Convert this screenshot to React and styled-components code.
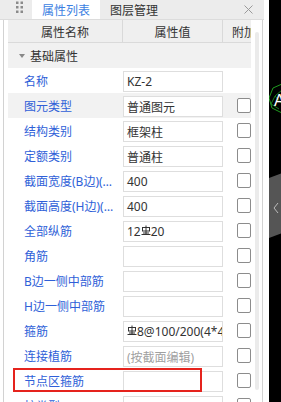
import React from 'react';
import styled, { createGlobalStyle } from 'styled-components';

const GlobalStyle = createGlobalStyle`
  html, body { margin: 0; padding: 0; background: #fff; }
  body {
    font-family: "Noto Sans", "Noto Sans CJK SC", sans-serif;
    font-size: 12px;
    color: #333;
  }
`;

const Page = styled.div`
  display: flex;
  width: 281px;
  height: 402px;
  overflow: hidden;
`;

const Panel = styled.div`
  width: 268px;
  display: flex;
  flex-direction: column;
  background: #fff;
`;

const TabBar = styled.div`
  flex-shrink: 0;
  height: 20px;
  width: 264px;
  display: flex;
  align-items: stretch;
  background: #ececec;
  border-bottom: 1px solid #dcdcdc;
  box-sizing: border-box;
`;

const Grip = styled.div`
  width: 32px;
  display: flex;
  justify-content: flex-start;
  padding-left: 16px;
  box-sizing: border-box;
  margin-top: -3px;
`;

const Tab = styled.div`
  width: 68px;
  display: flex;
  align-items: center;
  justify-content: ${(p) => (p.$active ? 'center' : 'flex-start')};
  padding-left: ${(p) => (p.$active ? '0' : '10px')};
  background: ${(p) => (p.$active ? '#fff' : 'transparent')};
  color: ${(p) => (p.$active ? '#3c7fe2' : '#333')};
  font-family: "Noto Sans CJK SC", sans-serif;
  font-size: 12px;
  line-height: 1;
`;

const Close = styled.div`
  margin-left: auto;
  width: 20px;
  display: flex;
  align-items: center;
  justify-content: flex-start;
`;

const Body = styled.div`
  flex: 1;
  display: flex;
  min-height: 0;
`;

const LeftGutter = styled.div`
  width: 8px;
  box-sizing: border-box;
  padding-left: 3px;
  display: flex;
`;

const Line = styled.div`
  width: 1px;
  background: #d2d2d2;
  align-self: stretch;
`;

const Grid = styled.div`
  width: 243px;
  display: flex;
  flex-direction: column;
  overflow: hidden;
`;

const HeaderRow = styled.div`
  flex-shrink: 0;
  display: grid;
  grid-template-columns: 115px 100px 28px;
  height: 23px;
  background: #efefef;
  border-bottom: 1px solid #dadada;
  box-sizing: border-box;
`;

const HeaderCell = styled.div`
  display: flex;
  align-items: center;
  justify-content: ${(p) => (p.$left ? 'flex-start' : 'center')};
  padding-left: ${(p) => (p.$left ? '9px' : '0')};
  border-right: ${(p) => (p.$last ? 'none' : '1px solid #d9d9d9')};
  font-family: "Noto Sans CJK SC", sans-serif;
  white-space: nowrap;
  overflow: hidden;
  color: #333;
`;

const GroupRow = styled.div`
  flex-shrink: 0;
  height: 25px;
  display: flex;
  align-items: center;
  background: #f1f1f1;
  padding-left: 11px;
  gap: 5px;
  font-family: "Noto Sans CJK SC", sans-serif;
  color: #333;
`;

const Caret = styled.span`
  width: 0;
  height: 0;
  border-left: 3px solid transparent;
  border-right: 3px solid transparent;
  border-top: 4px solid #888;
  margin-top: 1px;
`;

const Row = styled.div`
  flex-shrink: 0;
  position: relative;
  display: grid;
  grid-template-columns: 115px 100px 28px;
  height: 25px;
  background: ${(p) => (p.$hover ? '#f2f2f2' : '#fff')};
`;

const Label = styled.div`
  padding-left: 16px;
  padding-right: 6px;
  display: flex;
  align-items: center;
  color: #2f5fd8;
  white-space: nowrap;
  overflow: hidden;
  min-width: 0;

  span {
    overflow: hidden;
    text-overflow: ellipsis;
  }
`;

const ValueBox = styled.div`
  margin-top: 3px;
  height: 21px;
  box-sizing: border-box;
  border: 1px solid #dedede;
  background: #fff;
  padding-left: 3px;
  display: flex;
  align-items: center;
  white-space: nowrap;
  overflow: hidden;
  color: ${(p) => (p.$muted ? '#a0a0a0' : '#333')};

  svg { flex-shrink: 0; }
`;

const CheckCell = styled.div`
  padding-left: 14px;
  padding-top: 5px;
`;

const Check = styled.div`
  width: 14px;
  height: 15px;
  box-sizing: border-box;
  border: 1px solid #8c8c8c;
  border-radius: 2px;
  background: #fff;
`;

const Mark = styled.div`
  position: absolute;
  left: 5px;
  top: 0;
  width: 189px;
  height: 24px;
  box-sizing: border-box;
  border: 2px solid #e5231d;
  pointer-events: none;
`;

const ScrollGutter = styled.div`
  width: 11px;
  display: flex;
  justify-content: flex-start;
  padding: 12px 0 12px 4px;
  box-sizing: border-box;
`;

const Track = styled.div`
  width: 4px;
  border-radius: 2px;
  background: #ebebeb;
`;

const Canvas = styled.div`
  flex: 1;
  background: #000;
  margin-left: 5px;
`;

const RebarSymbol = () => (
  <svg width="10" height="11" viewBox="0 0 10 11" style={{ marginBottom: 3 }}>
    <g stroke="#333" strokeWidth="1" fill="none">
      <rect x="1.5" y="2.5" width="7" height="3.5" />
      <line x1="5" y1="0.5" x2="5" y2="9.5" />
      <line x1="0.5" y1="9.5" x2="9.5" y2="9.5" />
      <line x1="2" y1="8" x2="8" y2="8" />
    </g>
  </svg>
);

const rows = [
  { label: '名称', value: 'KZ-2', noCheck: true },
  { label: '图元类型', value: '普通图元', hover: true },
  { label: '结构类别', value: '框架柱' },
  { label: '定额类别', value: '普通柱' },
  { label: '截面宽度(B边)(mm)', value: '400' },
  { label: '截面高度(H边)(mm)', value: '400' },
  { label: '全部纵筋', value: <>12<RebarSymbol />20</> },
  { label: '角筋', value: '' },
  { label: 'B边一侧中部筋', value: '' },
  { label: 'H边一侧中部筋', value: '' },
  { label: '箍筋', value: <><RebarSymbol />8@100/200(4*4)</> },
  { label: '连接植筋', value: '(按截面编辑)', muted: true },
  { label: '节点区箍筋', value: '', marked: true },
  { label: '柱类型', value: '' },
];

export default function App() {
  return (
    <Page>
      <GlobalStyle />
      <Panel>
        <TabBar>
          <Grip>
            <svg width="7" height="18" viewBox="0 0 7 18">
              {[0, 1, 2, 3].map((r) =>
                [0, 1].map((c) => (
                  <rect key={`${r}-${c}`} x={c * 4.5} y={r * 4.5} width="2.5" height="2.5" fill="#8a8a8a" />
                ))
              )}
            </svg>
          </Grip>
          <Tab $active>属性列表</Tab>
          <Tab>图层管理</Tab>
          <Close>
            <svg width="9" height="9" viewBox="0 0 9 9">
              <path d="M0.5 0.5 L8.5 8.5 M8.5 0.5 L0.5 8.5" stroke="#9a9a9a" strokeWidth="1" />
            </svg>
          </Close>
        </TabBar>
        <Body>
          <LeftGutter>
            <Line />
          </LeftGutter>
          <Grid>
            <HeaderRow>
              <HeaderCell>属性名称</HeaderCell>
              <HeaderCell>属性值</HeaderCell>
              <HeaderCell $left $last>附加</HeaderCell>
            </HeaderRow>
            <GroupRow>
              <Caret />
              基础属性
            </GroupRow>
            {rows.map((r) => (
              <Row key={r.label} $hover={r.hover}>
                <Label>
                  <span>{r.label}</span>
                </Label>
                <ValueBox $muted={r.muted}>{r.value}</ValueBox>
                <CheckCell>{!r.noCheck && <Check />}</CheckCell>
                {r.marked && <Mark />}
              </Row>
            ))}
          </Grid>
          <ScrollGutter>
            <Track />
          </ScrollGutter>
          <Line />
        </Body>
      </Panel>
      <Canvas>
        <svg width="13" height="402" viewBox="0 0 13 402">
          <path d="M13 84 L4 88 L0 98 L3 108 L13 113" stroke="#1f9a1f" strokeWidth="1" fill="none" />
          <path d="M13 90 L6 96 L13 104 M6 96 L2 104 L10 109" stroke="#1f9a1f" strokeWidth="0.8" fill="none" />
          <text x="5" y="106" fill="#fff" fontSize="16" fontFamily="Liberation Sans, sans-serif">A</text>
          <path d="M0 178 L13 173 L13 233 L0 238 Z" fill="#555" />
          <path d="M9 203 L5 208 L9 213" stroke="#bbb" strokeWidth="1" fill="none" />
        </svg>
      </Canvas>
    </Page>
  );
}
